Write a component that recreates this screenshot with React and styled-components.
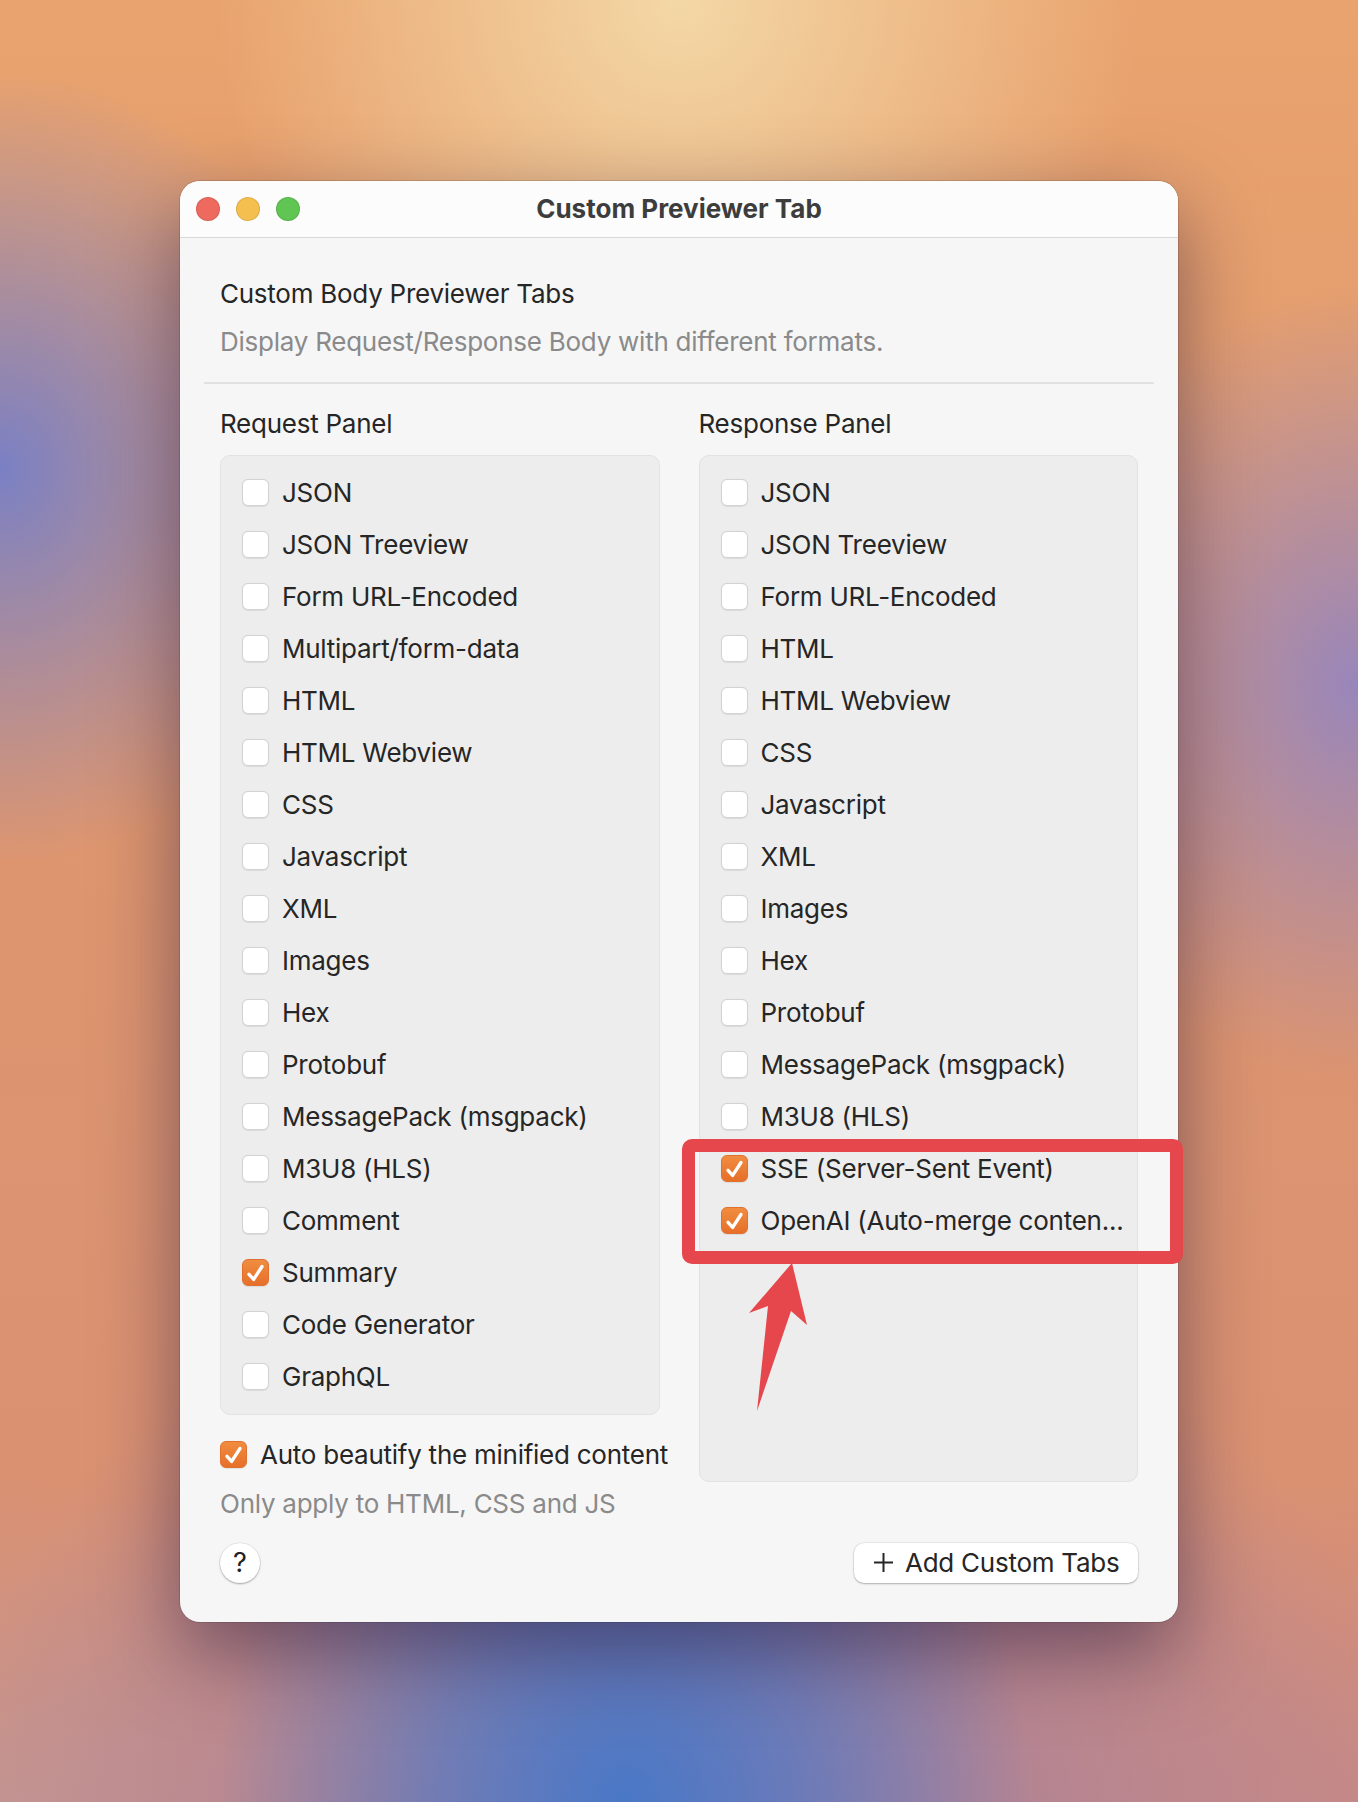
import React from 'react';
import styled, { createGlobalStyle } from 'styled-components';

const GlobalStyle = createGlobalStyle`
  html, body {
    margin: 0;
    padding: 0;
  }
  body {
    font-family: Inter, 'Noto Sans', 'Liberation Sans', sans-serif;
    -webkit-font-smoothing: antialiased;
  }
`;

const Desktop = styled.div`
  position: relative;
  width: 1358px;
  height: 1802px;
  display: flex;
  align-items: center;
  justify-content: center;
  overflow: hidden;
  background:
    radial-gradient(ellipse 34% 26% at 50% 0%, #f3d8a6 0%, rgba(243, 216, 166, 0) 100%),
    radial-gradient(ellipse 26% 22% at 0% 26%, #7a80c4 0%, rgba(122, 128, 196, 0) 100%),
    radial-gradient(ellipse 24% 22% at 100% 38%, #9886bb 0%, rgba(152, 134, 187, 0) 100%),
    radial-gradient(ellipse 30% 26% at 46% 100%, #4a78c6 0%, rgba(74, 120, 198, 0.6) 45%, rgba(74, 120, 198, 0) 100%),
    radial-gradient(ellipse 55% 30% at 50% 100%, rgba(140, 120, 180, 0.85) 0%, rgba(140, 120, 180, 0) 100%),
    radial-gradient(ellipse 28% 18% at 0% 100%, #c7968f 0%, rgba(199, 150, 143, 0) 100%),
    radial-gradient(ellipse 28% 18% at 100% 100%, #c98a84 0%, rgba(201, 138, 132, 0) 100%),
    linear-gradient(to bottom, #e9a36e 0%, #dd956f 50%, #d88f74 100%);
`;

const Window = styled.div`
  position: relative;
  width: 998px;
  height: 1441px;
  border-radius: 20px;
  background: #f6f6f6;
  display: flex;
  flex-direction: column;
  box-shadow: 0 30px 80px rgba(30, 20, 60, 0.5), 0 0 0 1px rgba(0, 0, 0, 0.12);
`;

const TitleBar = styled.div`
  height: 56px;
  display: grid;
  grid-template-columns: 1fr auto 1fr;
  align-items: center;
  padding: 0 16px;
  background: #fcfcfc;
  border-bottom: 1px solid #d9d9d9;
  border-radius: 20px 20px 0 0;
`;

const Lights = styled.div`
  display: flex;
  gap: 16px;
`;

const Light = styled.span`
  width: 24px;
  height: 24px;
  border-radius: 50%;
  box-sizing: border-box;
  background: ${(p) => p.$color};
  border: 1px solid rgba(0, 0, 0, 0.1);
`;

const Title = styled.div`
  font-size: 26px;
  font-weight: 700;
  color: #3d3d3d;
`;

const Content = styled.div`
  flex: 1;
  display: flex;
  flex-direction: column;
  padding: 40px 40px 39px;
  letter-spacing: -0.25px;
`;

const Heading = styled.div`
  font-size: 26px;
  line-height: 32px;
  color: #262626;
`;

const Hint = styled.div`
  font-size: 26px;
  line-height: 32px;
  color: #8a8a8a;
  margin-top: ${(p) => p.$top || 0}px;
`;

const Divider = styled.div`
  height: 2px;
  background: #e1e1e1;
  margin: 24px -16px 0;
`;

const Columns = styled.div`
  display: grid;
  grid-template-columns: minmax(0, 1fr) minmax(0, 1fr);
  column-gap: 39px;
  margin-top: 24px;
  align-items: start;
`;

const Column = styled.div`
  display: flex;
  flex-direction: column;
  min-width: 0;
`;

const SectionLabel = styled.div`
  font-size: 26px;
  line-height: 32px;
  color: #262626;
`;

const Panel = styled.div`
  margin-top: 15px;
  box-sizing: border-box;
  min-height: ${(p) => (p.$minHeight ? `${p.$minHeight}px` : 'auto')};
  padding: 11px 21px;
  background: #ededed;
  border: 1px solid #e2e2e2;
  border-radius: 10px;
`;

const Row = styled.label`
  display: flex;
  align-items: center;
  gap: 13px;
  height: ${(p) => p.$height || 52}px;
  margin-top: ${(p) => p.$top || 0}px;
  font-size: 26px;
  color: #262626;
  white-space: nowrap;
`;

const Box = styled.span`
  flex: none;
  width: 27px;
  height: 27px;
  box-sizing: border-box;
  border-radius: 6px;
  display: flex;
  align-items: center;
  justify-content: center;
  background: ${(p) => (p.$checked ? 'linear-gradient(to bottom, #f08d40, #e66f2a)' : '#ffffff')};
  border: 1px solid ${(p) => (p.$checked ? '#e0712f' : '#d2d2d2')};
  box-shadow: 0 0.5px 1px rgba(0, 0, 0, 0.08);
`;

const Footer = styled.div`
  margin-top: auto;
  display: flex;
  justify-content: space-between;
  align-items: center;
`;

const HelpButton = styled.button`
  width: 40px;
  height: 40px;
  border-radius: 50%;
  border: none;
  padding: 0;
  background: #ffffff;
  font-family: inherit;
  font-size: 27px;
  color: #222222;
  box-shadow: 0 1px 2px rgba(0, 0, 0, 0.3), 0 0 0 0.5px rgba(0, 0, 0, 0.1);
`;

const AddButton = styled.button`
  height: 40px;
  width: 284px;
  display: flex;
  align-items: center;
  gap: 11px;
  padding: 0 0 0 19px;
  border: none;
  border-radius: 10px;
  background: #ffffff;
  font-family: inherit;
  font-size: 26px;
  letter-spacing: -0.25px;
  color: #262626;
  box-shadow: 0 1px 2px rgba(0, 0, 0, 0.25), 0 0 0 0.5px rgba(0, 0, 0, 0.1);
`;

// red annotation drawn over the screenshot
const Highlight = styled.div`
  position: absolute;
  left: 502px;
  top: 958px;
  width: 501px;
  height: 125px;
  box-sizing: border-box;
  border: 13px solid #e5474d;
  border-radius: 10px;
  pointer-events: none;
`;

const Arrow = styled.svg`
  position: absolute;
  left: 560px;
  top: 1075px;
  pointer-events: none;
`;

const requestItems = [
  'JSON',
  'JSON Treeview',
  'Form URL-Encoded',
  'Multipart/form-data',
  'HTML',
  'HTML Webview',
  'CSS',
  'Javascript',
  'XML',
  'Images',
  'Hex',
  'Protobuf',
  'MessagePack (msgpack)',
  'M3U8 (HLS)',
  'Comment',
  'Summary',
  'Code Generator',
  'GraphQL',
];

const responseItems = [
  'JSON',
  'JSON Treeview',
  'Form URL-Encoded',
  'HTML',
  'HTML Webview',
  'CSS',
  'Javascript',
  'XML',
  'Images',
  'Hex',
  'Protobuf',
  'MessagePack (msgpack)',
  'M3U8 (HLS)',
  'SSE (Server-Sent Event)',
  'OpenAI (Auto-merge conten...',
];

const requestChecked = ['Summary'];
const responseChecked = ['SSE (Server-Sent Event)', 'OpenAI (Auto-merge conten...'];

function Checkbox({ checked }) {
  return (
    <Box $checked={checked}>
      {checked && (
        <svg width="27" height="27" viewBox="0 0 27 27">
          <path
            d="M6.5 15.5 L11.5 21 L20.5 7"
            fill="none"
            stroke="#ffffff"
            strokeWidth="3.6"
            strokeLinecap="round"
            strokeLinejoin="round"
          />
        </svg>
      )}
    </Box>
  );
}

function OptionList({ items, checked }) {
  return items.map((name) => (
    <Row key={name}>
      <Checkbox checked={checked.includes(name)} />
      <span>{name}</span>
    </Row>
  ));
}

export default function App() {
  return (
    <Desktop>
      <GlobalStyle />
      <Window>
        <TitleBar>
          <Lights>
            <Light $color="#ee6a5f" />
            <Light $color="#f5bf4f" />
            <Light $color="#61c554" />
          </Lights>
          <Title>Custom Previewer Tab</Title>
          <div />
        </TitleBar>

        <Content>
          <Heading>Custom Body Previewer Tabs</Heading>
          <Hint $top={16}>Display Request/Response Body with different formats.</Hint>
          <Divider />

          <Columns>
            <Column>
              <SectionLabel>Request Panel</SectionLabel>
              <Panel>
                <OptionList items={requestItems} checked={requestChecked} />
              </Panel>
              <Row $height={27} $top={26}>
                <Checkbox checked />
                <span>Auto beautify the minified content</span>
              </Row>
              <Hint $top={20}>Only apply to HTML, CSS and JS</Hint>
            </Column>

            <Column>
              <SectionLabel>Response Panel</SectionLabel>
              <Panel $minHeight={1027}>
                <OptionList items={responseItems} checked={responseChecked} />
              </Panel>
            </Column>
          </Columns>

          <Footer>
            <HelpButton>?</HelpButton>
            <AddButton>
              <svg width="21" height="21" viewBox="0 0 21 21">
                <path d="M10.5 1 V20 M1 10.5 H20" stroke="#262626" strokeWidth="2" />
              </svg>
              <span>Add Custom Tabs</span>
            </AddButton>
          </Footer>
        </Content>

        <Highlight />
        <Arrow width="75" height="160" viewBox="0 0 75 160">
          <polygon
            points="52,7 67,69 51,55 17,155 28,50 9,57"
            fill="#e5474d"
            strokeLinejoin="round"
          />
        </Arrow>
      </Window>
    </Desktop>
  );
}
